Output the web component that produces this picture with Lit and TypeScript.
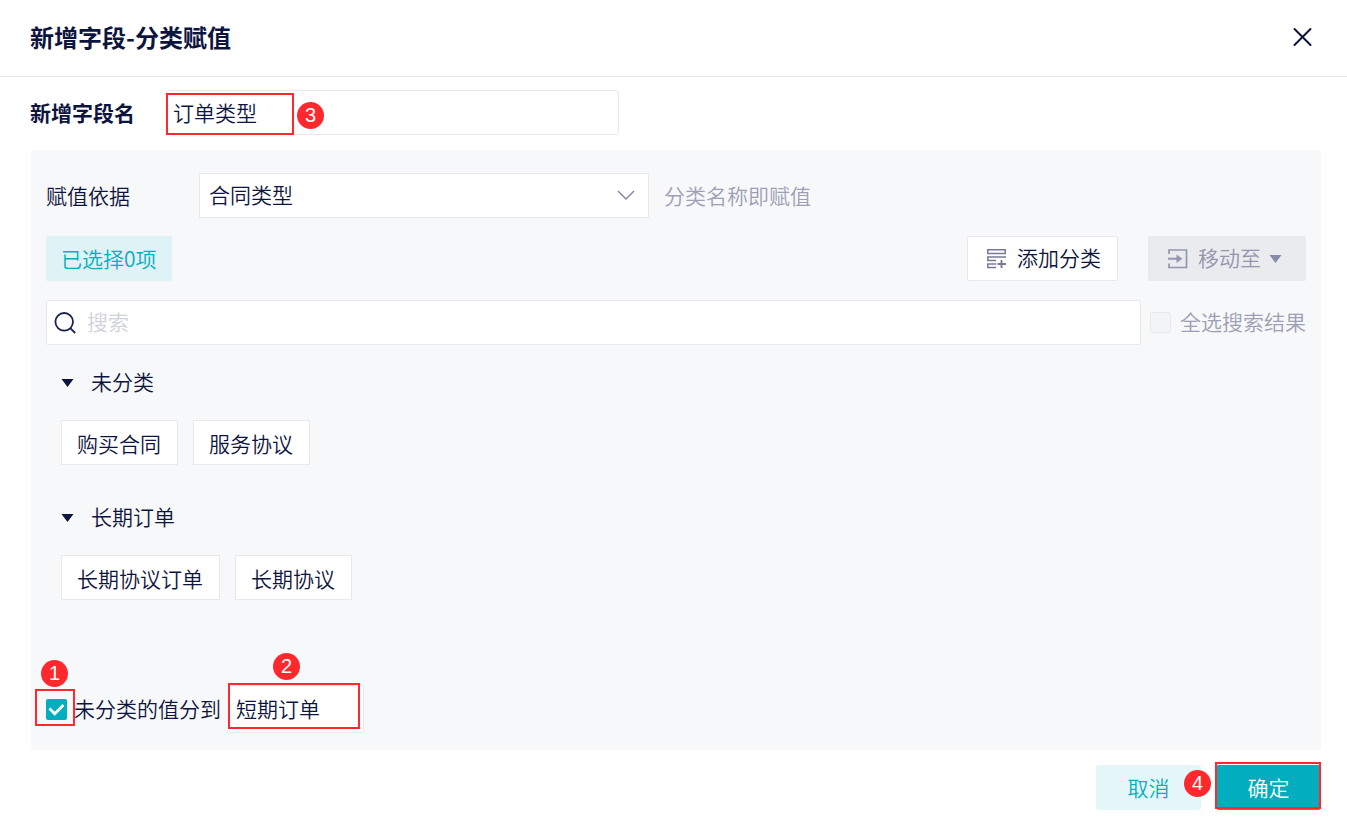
import { LitElement, html, css } from "lit";
import { customElement, property, state } from "lit/decorators.js";

interface Group {
  name: string;
  items: string[];
}

/** Red numbered marker, with an outline round the control it points at. */
@customElement("step-mark")
class StepMark extends LitElement {
  @property({ type: Number }) step = 1;

  static styles = css`
    :host {
      position: absolute;
      box-sizing: border-box;
      border: 2px solid #ff282d;
      pointer-events: none;
    }
    .badge {
      position: absolute;
      left: var(--badge-x, 0);
      top: var(--badge-y, 0);
      width: 27px;
      height: 27px;
      border-radius: 50%;
      background: #ff282d;
      color: #fff;
      font: 20px/27px "Liberation Sans", sans-serif;
      text-align: center;
    }
  `;

  render() {
    return html`<span class="badge">${this.step}</span>`;
  }
}

@customElement("app-root")
class AppRoot extends LitElement {
  @state() private groups: Group[] = [
    { name: "未分类", items: ["购买合同", "服务协议"] },
    { name: "长期订单", items: ["长期协议订单", "长期协议"] },
  ];

  static styles = css`
    :host {
      display: block;
      color: #0e1440;
      background: #fff;
      font-family: "Noto Sans CJK SC", sans-serif;
      font-weight: 350;
      font-size: 21px;
      line-height: 30px;
    }
    * {
      box-sizing: border-box;
    }
    button,
    input,
    select {
      font: inherit;
      color: inherit;
      margin: 0;
    }
    button {
      cursor: pointer;
    }
    svg {
      display: block;
      flex: none;
    }
    header {
      display: flex;
      align-items: center;
      justify-content: space-between;
      height: 77px;
      padding: 0 34px 2px 30px;
      border-bottom: 1px solid #e8e9ec;
    }
    h1 {
      margin: 0;
      font-size: 24px;
      font-weight: 700;
      line-height: 36px;
    }
    .close {
      padding: 0;
      border: 0;
      background: none;
    }
    main {
      padding: 13px 26px 15px 30px;
    }
    .row {
      display: flex;
      align-items: center;
    }
    .name-row {
      margin-bottom: 15px;
    }
    label,
    .muted {
      padding-bottom: 2px;
    }
    .name-label {
      width: 136px;
      font-weight: 700;
    }
    .wrap {
      position: relative;
    }
    .field {
      display: block;
      width: 100%;
      height: 45px;
      padding: 0 9px 4px;
      border: 1px solid #e8e9ed;
      border-radius: 2px;
      background: #fff;
      outline: none;
    }
    .name-wrap {
      width: 453px;
    }
    .name-wrap .field {
      padding: 0 6px 2px;
      border-radius: 3px;
    }
    .mark-name {
      left: 0;
      top: 3px;
      width: 128px;
      height: 42px;
      --badge-x: 129px;
      --badge-y: 7px;
    }
    .panel {
      margin-left: 1px;
      padding: 23px 15px 17px;
      background: #f7f8fa;
    }
    .basis-label {
      width: 153px;
    }
    .select-wrap {
      width: 450px;
      margin-right: 15px;
    }
    .select-wrap .field {
      appearance: none;
      border-radius: 0;
    }
    .select-wrap svg {
      position: absolute;
      right: 14px;
      top: 16px;
      pointer-events: none;
    }
    .muted {
      color: #9c9fb5;
    }
    .tools {
      margin-top: 18px;
      gap: 30px;
    }
    .tag {
      margin-right: auto;
      height: 45px;
      padding: 0 15px;
      line-height: 45px;
      border-radius: 2px;
      background: #dff2f5;
      color: #06afc0;
    }
    .btn {
      display: flex;
      align-items: center;
      height: 45px;
      padding: 0 16px 0 18px;
      border: 1px solid #e8e9ed;
      border-radius: 2px;
      background: #fff;
    }
    .btn svg {
      margin-right: 10px;
    }
    .btn span,
    .group-head span {
      padding-bottom: 3px;
    }
    .btn.off {
      padding: 0 23px 0 18px;
      background: #eaebef;
      color: #9296ae;
      cursor: default;
    }
    .btn.off .caret {
      margin: 0 0 0 8px;
    }
    .search-row {
      margin-top: 19px;
    }
    .search {
      flex: 1;
      margin-right: 9px;
    }
    .search svg {
      position: absolute;
      left: 8px;
      top: 11px;
    }
    .search .field {
      padding-left: 40px;
    }
    .field::placeholder {
      color: #d0d1db;
      opacity: 1;
    }
    .check {
      appearance: none;
      flex: none;
      width: 21px;
      height: 21px;
      border: 1px solid #e8e9ed;
      border-radius: 2px;
      background: #f3f4f7;
    }
    .all {
      margin-left: 9px;
      padding-bottom: 4px;
    }
    .groups {
      display: grid;
      gap: 30px;
      margin: 15px 0 85px;
      padding-left: 15px;
    }
    .group-head {
      display: flex;
      align-items: center;
      gap: 17px;
      height: 45px;
      padding: 0;
      border: 0;
      background: none;
    }
    .chips {
      display: flex;
      flex-wrap: wrap;
      gap: 15px;
      margin-top: 15px;
    }
    .chip {
      height: 45px;
      padding: 0 16px 0 15px;
      border: 1px solid #e8e9ed;
      background: #fff;
    }
    .check.on {
      display: block;
      border: 0;
      background: #02adbf;
    }
    .tick {
      position: absolute;
      left: 2px;
      top: 4px;
      pointer-events: none;
    }
    .mark-check {
      left: -11px;
      top: -10px;
      width: 40px;
      height: 37px;
      --badge-x: 4px;
      --badge-y: -31px;
    }
    .rest-label {
      margin: 0 8px 0 7px;
    }
    .rest-wrap {
      width: 135px;
    }
    .rest-wrap .field {
      height: 48px;
      padding: 0 6px 2px;
    }
    .mark-rest {
      left: -1px;
      top: -2px;
      width: 132px;
      height: 46px;
      --badge-x: 43px;
      --badge-y: -32px;
    }
    footer {
      display: flex;
      justify-content: flex-end;
      gap: 15px;
      padding: 0 26px 15px;
    }
    .action {
      display: block;
      width: 105px;
      height: 45px;
      padding: 0 0 2px;
      border: 0;
      border-radius: 3px;
      background: #e4f6f8;
      color: #06afc0;
    }
    .action.primary {
      background: #02adbf;
      color: #fff;
    }
    .mark-ok {
      left: -1px;
      top: -3px;
      width: 106px;
      height: 47px;
      --badge-x: -33px;
      --badge-y: 6px;
    }
  `;

  private renderGroup(group: Group) {
    return html`
      <section>
        <button class="group-head" type="button" aria-expanded="true">
          <svg width="13" height="10" viewBox="0 0 13 10"><path d="M.5 1h12l-6 8z" fill="#0e1440" /></svg>
          <span>${group.name}</span>
        </button>
        <div class="chips">
          ${group.items.map((item) => html`<button class="chip" type="button">${item}</button>`)}
        </div>
      </section>
    `;
  }

  render() {
    return html`
      <header>
        <h1>新增字段-分类赋值</h1>
        <button class="close" type="button" aria-label="关闭">
          <svg width="21" height="21" viewBox="0 0 21 21">
            <path d="M2.5 2l16 16M18.5 2l-16 16" stroke="#0e1440" stroke-width="2" stroke-linecap="round" />
          </svg>
        </button>
      </header>
      <main>
        <div class="row name-row">
          <label class="name-label" for="name">新增字段名</label>
          <div class="wrap name-wrap">
            <input class="field" id="name" type="text" .value=${"订单类型"} />
            <step-mark class="mark-name" .step=${3}></step-mark>
          </div>
        </div>
        <div class="panel">
          <div class="row">
            <label class="basis-label" for="basis">赋值依据</label>
            <div class="wrap select-wrap">
              <select class="field" id="basis">
                <option>合同类型</option>
              </select>
              <svg width="18" height="12" viewBox="0 0 18 12" fill="none">
                <path d="M1 2l8 8 8-8" stroke="#868aa5" stroke-width="1.5" />
              </svg>
            </div>
            <span class="muted">分类名称即赋值</span>
          </div>
          <div class="row tools">
            <span class="tag">已选择0项</span>
            <button class="btn" type="button">
              <svg width="21" height="21" viewBox="0 0 21 21" fill="none" stroke="#777b97" stroke-width="1.5">
                <path d="M1.8 1.8h17.4v3.7H1.8zM20 9H1.8v3.6h8.400M10.200 16H1.800v3.500h8.400" />
                <path d="M15.500 12v8M11.500 16h8.500" stroke-width="1.900" />
              </svg>
              <span>添加分类</span>
            </button>
            <button class="btn off" type="button" disabled>
              <svg width="21" height="21" viewBox="0 0 21 21" fill="none" stroke="#9296ae" stroke-width="1.7">
                <path d="M2 6V2h17.500v17.500H2v-4" />
                <path d="M1 10.700h10" stroke-width="2" />
                <path d="M9.500 6.500l6 4.200-6 4.200z" fill="#9296ae" stroke="none" />
              </svg>
              <span>移动至</span>
              <svg class="caret" width="13" height="10" viewBox="0 0 13 10"><path d="M.5 1h12l-6 8z" fill="#868aa5" /></svg>
            </button>
          </div>
          <div class="row search-row">
            <div class="wrap search">
              <input class="field" type="text" placeholder="搜索" aria-label="搜索" />
              <svg width="23" height="23" viewBox="0 0 23 23" fill="none" stroke="#1b2150" stroke-width="1.8">
                <circle cx="10.200" cy="10.800" r="8.800" />
                <path d="M16.200 17.200l5 4.800" />
              </svg>
            </div>
            <input class="check" id="all" type="checkbox" disabled />
            <label class="muted all" for="all">全选搜索结果</label>
          </div>
          <div class="groups">${this.groups.map((g) => this.renderGroup(g))}</div>
          <div class="row">
            <div class="wrap">
              <input class="check on" id="rest" type="checkbox" checked />
              <svg class="tick" width="17" height="14" viewBox="0 0 17 14" fill="none">
                <path d="M1.500 5.500l5.200 5.200 8.800-8.800" stroke="#fff" stroke-width="2.800" />
              </svg>
              <step-mark class="mark-check" .step=${1}></step-mark>
            </div>
            <label class="rest-label" for="rest">未分类的值分到</label>
            <div class="wrap rest-wrap">
              <input class="field" type="text" aria-label="分类名称" .value=${"短期订单"} />
              <step-mark class="mark-rest" .step=${2}></step-mark>
            </div>
          </div>
        </div>
      </main>
      <footer>
        <button class="action" type="button">取消</button>
        <div class="wrap">
          <button class="action primary" type="button">确定</button>
          <step-mark class="mark-ok" .step=${4}></step-mark>
        </div>
      </footer>
    `;
  }
}
